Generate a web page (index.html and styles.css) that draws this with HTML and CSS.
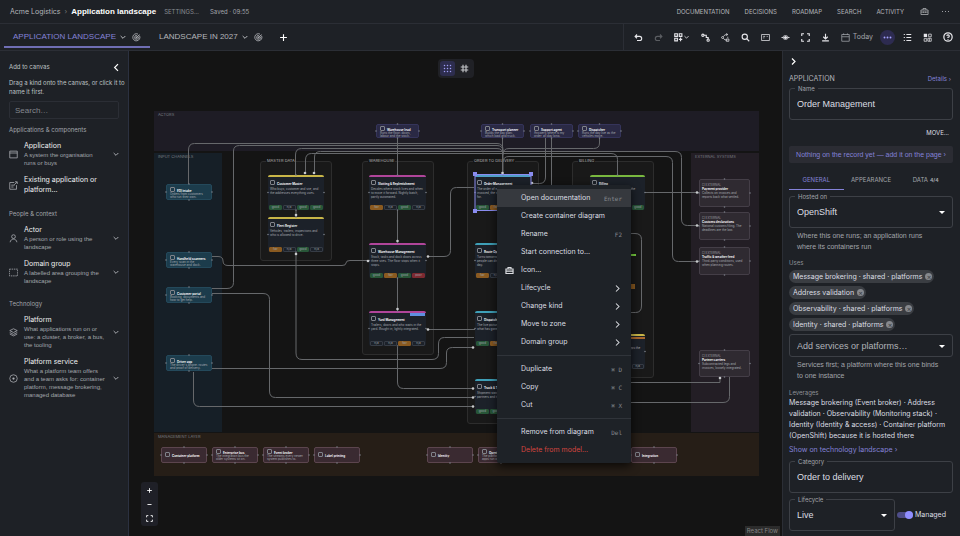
FILE: index.html
```html
<!DOCTYPE html>
<html lang="en">
<head>
<meta charset="utf-8">
<title>Application landscape</title>
<link rel="stylesheet" href="styles.css">
</head>
<body>
<svg class="defs" aria-hidden="true">
  <symbol id="i-down" viewBox="0 0 12 12"><path d="M2.500 4.500 6 8l3.500-3.500"/></symbol>
  <symbol id="i-right" viewBox="0 0 12 12"><path d="M4 2l4 4-4 4"/></symbol>
  <symbol id="i-left" viewBox="0 0 12 12"><path d="M8 1.500 3.500 6 8 10.500"/></symbol>
  <symbol id="i-radar" viewBox="0 0 24 24"><path d="M20 7a9.500 9.500 0 1 1-4-4M16.500 9.500a5 5 0 1 1-3-2.500M12 12l8-8"/><circle cx="12" cy="12" r="1.500"/></symbol>
  <symbol id="i-case" viewBox="0 0 24 24"><path d="M2.500 8h19v12h-19zM8 8V4h8v4M2.500 13.500h19M9 12v3.500M15 12v3.500"/></symbol>
</svg>

<header class="topbar">
  <nav class="crumbs" aria-label="Breadcrumb">
    <a href="#">Acme Logistics</a><span class="sep">›</span><h1>Application landscape</h1>
  </nav>
  <button class="txt dim">SETTINGS…</button>
  <span class="saved">Saved · 09:55</span>
  <nav class="mainnav" aria-label="Main">
    <a href="#">DOCUMENTATION</a><a href="#">DECISIONS</a><a href="#">ROADMAP</a><a href="#">SEARCH</a><a href="#">ACTIVITY</a>
    <button aria-label="Workspace"><svg class="ic"><use href="#i-case"/></svg></button>
    <button aria-label="More"><svg class="ic dots" viewBox="0 0 24 24"><circle cx="4" cy="12" r="1.500"/><circle cx="12" cy="12" r="1.500"/><circle cx="20" cy="12" r="1.500"/></svg></button>
  </nav>
</header>

<div class="tabbar">
  <div class="tabs">
    <div class="tab active"><button>APPLICATION LANDSCAPE</button><button aria-label="Tab menu"><svg class="ic s fine"><use href="#i-down"/></svg></button><button aria-label="Focus"><svg class="ic"><use href="#i-radar"/></svg></button></div>
    <div class="tab"><button>LANDSCAPE IN 2027</button><button aria-label="Tab menu"><svg class="ic s fine"><use href="#i-down"/></svg></button><button aria-label="Focus"><svg class="ic"><use href="#i-radar"/></svg></button></div>
    <button class="add" aria-label="Add tab"><svg class="ic bold" viewBox="0 0 24 24"><path d="M12 3v18M3 12h18"/></svg></button>
  </div>
  <div class="tools">
    <button aria-label="Undo"><svg class="ic bold" viewBox="0 0 24 24"><path d="M8 4 3 9l5 5M3 9h12a5 5 0 0 1 0 11H8"/></svg></button>
    <button aria-label="Redo" class="off"><svg class="ic bold" viewBox="0 0 24 24"><path d="m16 4 5 5-5 5M21 9H9a5 5 0 0 0 0 11h7"/></svg></button>
    <button aria-label="Arrange" class="pair"><svg class="ic bold" viewBox="0 0 24 24"><path d="M2 2h7v7H2zM14 2h7v7h-7zM2 14h7v7H2zM17.500 12v10M13 17h9"/></svg><svg class="ic s fine"><use href="#i-down"/></svg></button>
    <button aria-label="Route edges"><svg class="ic bold" viewBox="0 0 24 24"><circle cx="5" cy="6" r="3"/><circle cx="19" cy="19" r="3"/><path d="M8 6h6v6h5v4"/></svg></button>
    <button aria-label="Branch"><svg class="ic" viewBox="0 0 24 24"><circle cx="4" cy="12" r="2.500"/><path d="M6 10c3-5 6-6 11-6M6 14c3 4 6 5 11 5M14 1l4 3-4 3M14 16h7v6h-7zM18 10v3"/></svg></button>
    <button aria-label="Search"><svg class="ic bold" viewBox="0 0 24 24"><circle cx="10" cy="10" r="7"/><path d="m15 15 7 7"/></svg></button>
    <button aria-label="Notes"><svg class="ic" viewBox="0 0 24 24"><path d="M1.500 4h21v16h-21zM6 9h5M6 13h3M15 9h3"/></svg></button>
    <button aria-label="Visibility"><svg class="ic" viewBox="0 0 24 24"><path d="M1 12h22M4 12c4-7 12-7 16 0-4 7-12 7-16 0z"/><circle class="fill" cx="12" cy="12" r="4"/></svg></button>
    <button aria-label="Fit view"><svg class="ic bold" viewBox="0 0 24 24"><path d="M2 8V2h6M16 2h6v6M22 16v6h-6M8 22H2v-6"/></svg></button>
    <button aria-label="Download"><svg class="ic bold" viewBox="0 0 24 24"><path d="M12 2v13M6 10l6 6 6-6M3 21h18"/></svg></button>
    <button class="today"><svg class="ic" viewBox="0 0 24 24"><path d="M2 4h20v18H2zM2 10h20M7 1v4M17 1v4"/></svg>Today</button>
    <button aria-label="More tools" class="round"><svg class="ic dots" viewBox="0 0 24 24"><circle cx="4" cy="12" r="2.500"/><circle cx="12" cy="12" r="2.500"/><circle cx="20" cy="12" r="2.500"/></svg></button>
    <button aria-label="Outline"><svg class="ic bold" viewBox="0 0 24 24"><path d="M9 4h13M9 12h13M9 20h13M2 4h3M2 12h3M2 20h3"/></svg></button>
    <button aria-label="Layers"><svg class="ic" viewBox="0 0 24 24"><path class="fill" d="M2 2h9v9H2z"/><path d="M15 3h7v7h-7zM3 15h7v7H3zM13 14h9v8h-9zM17 14v8"/></svg></button>
    <button aria-label="Help"><svg class="ic l bold" viewBox="0 0 24 24"><circle cx="12" cy="12" r="10"/><path d="M9 9.500a3 3 0 1 1 3 3.500v1.500M12 17v1.500"/></svg></button>
  </div>
</div>

<main class="work">
  <aside class="palette">
    <div class="phead"><h2>Add to canvas</h2><button aria-label="Collapse"><svg class="ic bright"><use href="#i-left"/></svg></button></div>
    <p class="hint">Drag a kind onto the canvas, or click it to name it first.</p>
    <input class="search" type="search" placeholder="Search…" aria-label="Search kinds">
    <h3>Applications &amp; components</h3>
    <button class="kind"><svg class="ic" viewBox="0 0 24 24"><path d="M2 3h20v18H2zM2 8h20"/></svg><span><b>Application</b><small>A system the organisation runs or buys</small></span><svg class="ic s fine"><use href="#i-down"/></svg></button>
    <button class="kind"><svg class="ic" viewBox="0 0 24 24"><path d="M14 4H2v18h18V11M6 11h9M6 16h6M14 10l7-7M16 2h6v6"/></svg><span><b>Existing application or platform…</b></span></button>
    <h3>People &amp; context</h3>
    <button class="kind"><svg class="ic" viewBox="0 0 24 24"><circle cx="12" cy="7" r="5"/><path d="M3 22c1-11 17-11 18 0"/></svg><span><b>Actor</b><small>A person or role using the landscape</small></span><svg class="ic s fine"><use href="#i-down"/></svg></button>
    <button class="kind"><svg class="ic" viewBox="0 0 24 24"><path stroke-dasharray="4 2" d="M1 3h22v18H1z"/></svg><span><b>Domain group</b><small>A labelled area grouping the landscape</small></span><svg class="ic s fine"><use href="#i-down"/></svg></button>
    <h3>Technology</h3>
    <button class="kind"><svg class="ic" viewBox="0 0 24 24"><path d="m12 2 10 5-10 5L2 7zM2 12l10 5 10-5M2 16l10 5 10-5"/></svg><span><b>Platform</b><small>What applications run on or use: a cluster, a broker, a bus, the tooling</small></span><svg class="ic s fine"><use href="#i-down"/></svg></button>
    <button class="kind"><svg class="ic" viewBox="0 0 24 24"><circle cx="12" cy="12" r="10"/><circle class="fill" cx="12" cy="12" r="3"/></svg><span><b>Platform service</b><small>What a platform team offers and a team asks for: container platform, message brokering, managed database</small></span><svg class="ic s fine"><use href="#i-down"/></svg></button>
  </aside>

  <section class="canvas" aria-label="Diagram">
    <div class="world" id="world">
      <svg class="edges" id="edges" aria-hidden="true"></svg>
    </div>
    <div class="snap">
      <button class="on" aria-label="Dot grid"><svg class="ic dots" viewBox="0 0 24 24"><g id="gd"><circle cx="4" cy="4" r="2"/><circle cx="12" cy="4" r="2"/><circle cx="20" cy="4" r="2"/></g><use href="#gd" y="8"/><use href="#gd" y="16"/></svg></button>
      <button aria-label="Line grid"><svg class="ic bold" viewBox="0 0 24 24"><path d="M8 2v20M16 2v20M2 8h20M2 16h20"/></svg></button>
    </div>
    <div class="zoom">
      <button aria-label="Zoom in"><svg class="ic bold" viewBox="0 0 24 24"><path d="M12 4v16M4 12h16"/></svg></button>
      <button aria-label="Zoom out"><svg class="ic bold" viewBox="0 0 24 24"><path d="M5 12h14"/></svg></button>
      <button aria-label="Fit"><svg class="ic bold" viewBox="0 0 24 24"><path d="M2 8V2h6M16 2h6v6M22 16v6h-6M8 22H2v-6"/></svg></button>
    </div>
    <a class="credit" href="#">React Flow</a>
    <div class="menu" role="menu">
      <button role="menuitem" class="hot"><span>Open documentation</span><kbd>Enter</kbd></button>
      <button role="menuitem"><span>Create container diagram</span></button>
      <button role="menuitem"><span>Rename</span><kbd>F2</kbd></button>
      <button role="menuitem"><span>Start connection to…</span></button>
      <button role="menuitem"><svg class="ic bold"><use href="#i-case"/></svg><span>Icon…</span></button>
      <button role="menuitem"><span>Lifecycle</span><svg class="ic fine"><use href="#i-right"/></svg></button>
      <button role="menuitem"><span>Change kind</span><svg class="ic fine"><use href="#i-right"/></svg></button>
      <button role="menuitem"><span>Move to zone</span><svg class="ic fine"><use href="#i-right"/></svg></button>
      <button role="menuitem"><span>Domain group</span><svg class="ic fine"><use href="#i-right"/></svg></button>
      <hr>
      <button role="menuitem"><span>Duplicate</span><kbd>⌘ D</kbd></button>
      <button role="menuitem"><span>Copy</span><kbd>⌘ C</kbd></button>
      <button role="menuitem"><span>Cut</span><kbd>⌘ X</kbd></button>
      <hr>
      <button role="menuitem"><span>Remove from diagram</span><kbd>Del</kbd></button>
      <button role="menuitem" class="danger"><span>Delete from model…</span></button>
    </div>
  </section>

  <aside class="inspector">
    <button class="close" aria-label="Close panel"><svg class="ic bright"><use href="#i-right"/></svg></button>
    <div class="kindrow"><h2>APPLICATION</h2><a href="#">Details ›</a></div>
    <div class="field"><label for="name">Name</label><input id="name" value="Order Management"></div>
    <button class="move">MOVE…</button>
    <a class="notice" href="#">Nothing on the record yet — add it on the page ›</a>
    <div class="itabs"><button class="active">GENERAL</button><button>APPEARANCE</button><button>DATA <small>4/4</small></button></div>
    <div class="ibody">
      <div class="field pick"><label for="host">Hosted on</label><select id="host"><option>OpenShift</option></select></div>
      <p class="help">Where this one runs; an application runs where its containers run</p>
      <h4>Uses</h4>
      <div class="chips">
        <span class="chip">Message brokering · shared · platforms<button aria-label="Remove">×</button></span>
        <span class="chip">Address validation<button aria-label="Remove">×</button></span>
        <span class="chip">Observability · shared · platforms<button aria-label="Remove">×</button></span>
        <span class="chip">Identity · shared · platforms<button aria-label="Remove">×</button></span>
      </div>
      <div class="field pick low"><select aria-label="Add services or platforms"><option>Add services or platforms…</option></select></div>
      <p class="help">Services first; a platform where this one binds to one instance</p>
      <h4 class="lev">Leverages</h4>
      <p class="body">Message brokering (Event broker) · Address validation · Observability (Monitoring stack) · Identity (Identity &amp; access) · Container platform (OpenShift) because it is hosted there</p>
      <a class="show" href="#">Show on technology landscape ›</a>
      <div class="field"><label for="cat">Category</label><input id="cat" value="Order to delivery"></div>
      <div class="pairrow">
        <div class="field pick"><label for="life">Lifecycle</label><select id="life"><option>Live</option></select></div>
        <label class="switch"><input type="checkbox" role="switch" checked>Managed</label>
      </div>
    </div>
  </aside>
</main>
<script src="script.js"></script>
</body>
</html>
```
FILE: styles.css
```css
:root {
  --panel: #1e2126;
  --line: #2b2e35;
  --text: #dcdee2;
  --dim: #a2a5ab;
  --accent: #8482d8;
  --ui: Inter, "Liberation Sans", sans-serif;
  --wide: "Liberation Sans", Arial, sans-serif;
}
* { box-sizing: border-box; margin: 0; padding: 0; }
body {
  height: 100vh;
  display: flex;
  flex-direction: column;
  overflow: hidden;
  background: #141414;
  color: var(--text);
  font: 7px/10px var(--ui);
}
button, input, select { font: inherit; color: inherit; background: none; border: 0; }
button { display: flex; align-items: center; }
a { color: inherit; text-decoration: none; }
h1, h2, h3, h4 { font: inherit; }
.defs { display: none; }
.ic { width: 9px; height: 9px; flex: none; fill: none; stroke: currentColor; stroke-width: 2; }
.ic.s { width: 8px; height: 8px; }
.ic.l { width: 10px; height: 10px; }
.ic.bold { stroke-width: 3; }
.ic.fine { stroke-width: 1.4; }
.ic.bright { color: #fff; stroke-width: 1.6; }
.ic.dots, .ic .fill { fill: currentColor; stroke: none; }

.topbar {
  flex: none;
  display: flex;
  align-items: center;
  height: 24px;
  padding: 0 10px;
  background: var(--panel);
  border-bottom: 1px solid var(--line);
}
.crumbs { display: flex; align-items: center; gap: 4px; color: #b4b6ba; }
.crumbs .sep { color: #777; }
.crumbs h1 { font: 700 8px/10px var(--wide); color: #fff; }
.txt { margin-left: 8px; font-size: 6px; color: #898c92; }
.saved { margin-left: 11px; font-size: 6px; color: var(--dim); }
.mainnav { display: flex; align-items: center; gap: 15px; margin-left: auto; font-size: 6px; color: #b4b6ba; }
.mainnav button { margin-left: 1px; }
.mainnav button + button { margin-left: -3px; }

.tabbar {
  flex: none;
  display: flex;
  justify-content: space-between;
  height: 27px;
  background: var(--panel);
  border-bottom: 1px solid var(--line);
}
.tabs { display: flex; padding-left: 4px; font: 8px/10px var(--wide); }
.tab { display: flex; align-items: center; gap: 3px; margin-bottom: 2px; padding: 4px 9px 0; border-bottom: 2px solid transparent; color: #b4b6ba; }
.tab.active { border-color: #6f6eb4; }
.tab.active button:first-child { color: var(--accent); }
.tab button:last-child { margin-left: 2px; }
.tab .ic { color: #c4c6ca; }
.add { padding: 0 7px; color: #fff; }
.tools { display: flex; align-items: center; gap: 11px; padding: 0 7px 0 10px; border-left: 1px solid var(--line); color: #e6e6ea; }
.tools .off { opacity: .3; }
.tools .pair .s { width: 7px; }
.tools .today { gap: 3px; margin-right: -1px; color: var(--dim); }
.tools .round { width: 15px; height: 15px; margin: 0 -3px; justify-content: center; border-radius: 50%; background: #2d2b50; color: #a5a2ff; }

.work { flex: 1; min-height: 0; display: grid; grid-template-columns: 129px 1fr 178px; }

.palette { padding: 11px 7px 0 9px; background: var(--panel); border-right: 1px solid #2b3140; overflow: hidden; }
.phead { display: flex; justify-content: space-between; align-items: center; color: #bfc1c5; font-size: 6px; }
.hint { margin: 6px -4px 0 0; font-size: 6px; line-height: 9px; color: #bfc1c5; }
.search { display: block; width: 110px; height: 18px; margin-top: 5px; padding: 0 5px; border: 1px solid var(--line); border-radius: 2px; font: 8px/10px var(--wide); }
.search::placeholder { color: #85888e; }
.palette h3 { padding: 10px 0 2px; font-size: 6px; color: var(--dim); }
.palette .search + h3 { padding-top: 6px; }
.kind { width: 100%; padding: 4px 0; gap: 6px; text-align: left; color: #b0b3b8; }
.kind span { flex: 1; padding-right: 1px; }
.kind b { display: block; font-weight: 400; color: #eeeff1; }
.kind small { display: block; font: 6px/8px var(--wide); color: var(--dim); }
.kind > .s { margin-right: 1px; }

.canvas { position: relative; overflow: hidden; background: #141414; }
.world { position: absolute; inset: 0; font: 3px/4px var(--ui); }
.edges { position: absolute; inset: 0; width: 100%; height: 100%; fill: none; stroke: #66686b; stroke-width: 1; }
.edges .head { fill: #c8cacd; stroke: none; }
.edges .port { fill: #777b84; stroke: none; }
.edges .grip { fill: #8a8cf0; stroke: none; }
.zone { position: absolute; padding: 2px 4px; color: #777a80; font-size: 4px; }
.zone.actors { background: #1e1c25; }
.zone.input { background: #161f27; }
.zone.external { background: #231e25; }
.zone.mgmt { background: #261e17; }
.group { position: absolute; border: 1px solid #2d2d2d; border-radius: 3px; background: #191919; }
.group span { position: absolute; top: -3px; left: 5px; padding: 0 1px; background: #161616; color: #b0b0b0; font-size: 4px; white-space: nowrap; }
.node { position: absolute; overflow: hidden; border-radius: 2px; color: #a7abb2; }
.node b { display: block; white-space: nowrap; color: #f0f1f4; }
.node b::before { content: ""; display: inline-block; width: 3px; height: 3px; margin-right: 2px; border: 1px solid #80838a; border-radius: 1px; }
.node p { line-height: 3px; height: 6px; }
.node.app { padding: 3px 2px; background: #1c2129; border-top: 2px solid #999; }
.node.app p { height: auto; padding-top: 1px; line-height: 4px; }
.node.yellow { border-color: #c9b648; }
.node.pink { border-color: #b0459a; }
.node.cyan { border-color: #3fa0b8; }
.node.blue { border-color: #4f9fc8; }
.node.green { border-color: #79b83f; }
.node.actor { padding: 1px 3px; background: #2a2944; border: 1px solid #35345a; }
.node.channel { padding: 2px 3px; background: #1c3c4c; border: 1px solid #24495b; }
.node.ext { padding: 3px 2px; background: #2f2a31; border: 1px solid #443e47; }
.node.ext i { display: block; font-style: normal; color: #9b98a0; }
.node.ext b::before { display: none; }
.node.ext p { line-height: 4px; height: 8px; }
.node.plat { display: flex; flex-direction: column; justify-content: center; padding: 0 3px; background: #3a2a31; border: 1px solid #5c454e; }
.tags { position: absolute; left: 1px; right: 1px; bottom: 0; height: 5px; display: flex; gap: 1px; }
.tags span { flex: 1; border: 1px solid #363c45; border-radius: 1px; line-height: 3px; text-align: center; color: #9ea3aa; }
.tags .g { background: #285638; border-color: #285638; }
.tags .o { background: #8a5a20; border-color: #8a5a20; }
.tags .r { background: #7c2930; border-color: #7c2930; }

.snap { position: absolute; top: 8px; left: 50%; transform: translateX(-50%); display: flex; gap: 2px; padding: 2px; border-radius: 4px; background: #202126; color: #c4c6ca; }
.snap button { width: 15px; height: 15px; justify-content: center; border-radius: 3px; }
.snap .on { background: #2d2d4e; color: #a09ef5; }
.zoom { position: absolute; left: 12px; bottom: 10px; padding: 1px; border-radius: 3px; background: #1f2027; color: #fff; }
.zoom button { width: 15px; height: 14px; justify-content: center; }
.zoom .ic { width: 7px; height: 7px; }
.credit { position: absolute; right: 2px; bottom: 0; padding: 0 2px; background: #2c2c2c; color: #858585; font-size: 6px; }

.menu {
  position: absolute;
  left: 368px;
  top: 134px;
  width: 134px;
  padding: 4px 0;
  border-radius: 2px;
  background: #1e2227;
  box-shadow: 0 3px 10px #000b;
}
.menu button { position: relative; width: 100%; height: 18px; padding: 0 9px 0 24px; justify-content: space-between; }
.menu .hot { background: #36393e; }
.menu kbd { font: 6px "DejaVu Sans Mono", monospace; color: #85898f; }
.menu .ic:first-child { position: absolute; left: 8px; }
.menu hr { margin: 4px 0; border: 0; border-top: 1px solid #30343a; }
.menu .danger { color: #d4453f; }

.inspector { padding: 5px 7px 0 6px; background: var(--panel); border-left: 1px solid var(--line); overflow: hidden; }
.close { height: 10px; }
.kindrow { display: flex; justify-content: space-between; margin: 8px 0 4px; color: #b4b6ba; }
.kindrow a { padding-right: 2px; font-size: 6px; color: var(--accent); }
.field { position: relative; height: 32px; border: 1px solid #3d4046; border-radius: 3px; }
.field label { position: absolute; left: 5px; top: -5px; padding: 0 3px; font-size: 6px; line-height: 9px; background: var(--panel); color: var(--dim); }
.field input, .field select { display: block; width: 100%; height: 100%; padding: 0 7px; font: 9px/12px var(--wide); appearance: none; outline: 0; }
.pick::after { content: ""; position: absolute; right: 7px; top: calc(50% - 1px); border: 3px solid transparent; border-top-color: #fff; pointer-events: none; }
.field.low { height: 23px; }
.low select { color: #b0b3b8; }
.move { margin: 8px 4px 8px auto; font-size: 6px; }
.notice { display: block; padding: 4px 0; border-radius: 2px; background: #2b2c33; font: 7px/9px var(--wide); color: var(--accent); white-space: nowrap; text-align: center; }
.itabs { display: flex; margin-top: 7px; font-size: 6px; color: var(--dim); }
.itabs button { flex: 1; height: 20px; justify-content: center; gap: 2px; border-bottom: 1px solid transparent; }
.itabs small { font-size: 5px; font-weight: 700; }
.itabs .active { color: var(--accent); border-color: var(--accent); }
.ibody { padding-top: 6px; }
.help { padding: 2px 12px 0 8px; font: 7px/11px var(--wide); color: var(--dim); }
.ibody h4 { margin-top: 7px; font-size: 6px; line-height: 8px; color: #8f9298; }
.chips { display: flex; flex-direction: column; align-items: flex-start; gap: 3px; margin: 3px 0; }
.chip { display: flex; align-items: center; gap: 3px; height: 13px; padding: 0 2px 0 4px; border-radius: 7px; background: #3a3d42; }
.chip button { width: 7px; height: 7px; justify-content: center; border-radius: 50%; background: #85888d; color: #3a3d42; line-height: 7px; }
.ibody .lev { margin-top: 8px; }
.body { line-height: 11px; }
.show { display: block; margin: 4px 0 6px; color: var(--accent); }
.pairrow { display: flex; align-items: center; gap: 2px; margin-top: 6px; }
.pairrow .field { flex: 0 0 106px; }
.switch { display: flex; align-items: center; gap: 2px; }
.switch input { position: relative; width: 16px; height: 6px; border-radius: 3px; background: #4e4d88; appearance: none; }
.switch input::after { content: ""; position: absolute; right: 0; top: -1px; width: 8px; height: 8px; border-radius: 50%; background: #908eff; }
```
FILE: script.js
```js
// Diagram data in model coordinates; ORIGIN is the model point at the canvas corner.
const ORIGIN = { x: 129, y: 51 };
const world = document.getElementById("world");
const edges = document.getElementById("edges");

function place(cls, x, y, w, h, html) {
  const el = document.createElement("div");
  el.className = cls;
  el.style.cssText = `left:${x - ORIGIN.x}px;top:${y - ORIGIN.y}px;width:${w}px;height:${h}px`;
  el.innerHTML = html;
  world.insertBefore(el, cls.startsWith("node") ? null : edges);
}

[
  ["actors", 154, 111, 605, 40, "ACTORS"],
  ["input", 154, 153, 68, 279, "INPUT CHANNELS"],
  ["external", 691, 153, 68, 279, "EXTERNAL SYSTEMS"],
  ["mgmt", 154, 433, 605, 43, "MANAGEMENT LAYER"]
].forEach(([c, x, y, w, h, t]) => place("zone " + c, x, y, w, h, t));

[
  [260, 161, 72, 100, "MASTER DATA"],
  [362, 161, 72, 194, "WAREHOUSE"],
  [467, 161, 72, 263, "ORDER TO DELIVERY"],
  [572, 161, 82, 217, "BILLING"]
].forEach(([x, y, w, h, t]) => place("group", x, y, w, h, `<span>${t}</span>`));

const ports = [];
function node(kind, x, y, w, h, title, text = "", tags = "") {
  const labels = { g: "good", o: "fair", r: "poor", n: "n/a" };
  const strip = tags && `<div class="tags">${[...tags].map(t => `<span class="${t}">${labels[t]}</span>`).join("")}</div>`;
  const over = kind === "ext" ? "<i>▢ EXTERNAL</i>" : "";
  place("node " + kind, x, y, w, h, `${over}<b>${title}</b>${text && `<p>${text}</p>`}${strip}`);
  ports.push([x, y + h / 2], [x + w, y + h / 2], [x + w / 2, y], [x + w / 2, y + h]);
}

node("app yellow", 268, 175, 56, 35, "Customer Master", "Who buys, customer and site, and the addresses everything uses.", "gngg");
node("app yellow", 268, 217, 56, 35, "Fleet Register", "Vehicles, trailers, inspections and who is allowed to drive.", "ongn");
node("app pink", 369, 175, 57, 35, "Slotting &amp; Replenishment", "Decides where stock lives and when to move it forward. Nightly batch, partly automated.", "ongn");
node("app pink", 369, 243, 57, 35, "Warehouse Management", "Stock, tasks and dock doors across three sites. The floor stops when it stops.", "gogr");
node("app pink", 369, 311, 57, 35, "Yard Management", "Trailers, doors and who waits in the yard. Bought in, lightly integrated.", "nnon");
node("app blue", 475, 175, 56, 35, "Order Management", "The order of record: booked to invoiced, the status everyone asks for.", "gogn");
node("app cyan", 475, 243, 56, 35, "Route Optimisation", "Turns tomorrow's orders into routes people can drive, replanned every day.", "ongg");
node("app cyan", 475, 311, 56, 35, "Dispatch Board", "The live picture: who has what load, what has gone wrong.", "gogn");
node("app cyan", 475, 379, 56, 35, "Track &amp; Trace", "Shipment status for support, partners and the customer portal.", "gggg");
node("app green", 590, 175, 55, 35, "Billing", "Rates each delivery, raises the invoice and chases it.", "gngg");
node("app yellow", 590, 334, 55, 35, "Ledger", "Posts every invoice and keeps the books in one place.", "ngnn");

node("actor", 376, 124, 43, 14, "Warehouse lead", "Runs the floor: doors, labour and the stock.");
node("actor", 481, 124, 43, 14, "Transport planner", "Builds the day plan: which load and truck.");
node("actor", 530, 124, 43, 14, "Support agent", "Answers where is my order, all day long.");
node("actor", 578, 124, 43, 14, "Dispatcher", "Runs the day live as the vehicles move.");

node("channel", 166, 184, 46, 16, "EDI intake", "Orders from customers who run their own.");
node("channel", 166, 252, 46, 16, "Handheld scanners", "Every scan in the warehouse and dock.");
node("channel", 166, 287, 46, 16, "Customer portal", "Booking, documents and how to get help.");
node("channel", 166, 355, 46, 16, "Driver app", "The driver's phone: routes and proof of delivery.");

node("ext", 699, 179, 51, 28, "Payment provider", "Collects on invoices and reports back what settled.");
node("ext", 699, 212, 51, 28, "Customs declarations", "National customs filing. The deadlines are the law.");
node("ext", 699, 247, 51, 28, "Traffic &amp; weather feed", "Third-party conditions, used when planning routes.");
node("ext", 699, 350, 51, 27, "Partner carriers", "Subcontracted legs and invoices, loosely integrated.");

node("plat", 161, 447, 46, 16, "Container platform");
node("plat", 212, 447, 46, 16, "Enterprise bus", "The integration bus the older systems sit on.");
node("plat", 263, 447, 46, 16, "Event broker", "The streams every newer system publishes to.");
node("plat", 314, 447, 46, 16, "Label printing");
node("plat", 427, 447, 46, 16, "Identity");
node("plat", 478, 447, 46, 16, "OpenShift", "The platform the newer apps run on.");
node("plat", 631, 447, 46, 16, "Integration");

const paths = [
  "M188.500 184V150q0-6.500 6-6.500H497q6 0 6 6V175",
  "M212 288.500H227q6.500 0 6.500-6V151q0-5.500 6-5.500H497q6 0 6 6",
  "M295.500 175V155q0-6.500 6-6.500H497q6 0 6 6",
  "M305.500 174V160q0-6.500 6-6.500H611q6.500 0 6.500 6V175",
  "M314.500 174V157q0-5.500 6-5.500H675q6.500 0 6.500 6V219q0 6.500 6 6.500H699",
  "M503 162q0-5.500 6-5.500H666q6.500 0 6.500 6V255q0 6.500 6 6.500H699",
  "M599.500 138V143q0 5.500-6 5.500H509q-6 0-6 6",
  "M502.500 138V175", "M397.500 138V175", "M397.500 210V242", "M397.500 278V311",
  "M545.500 138V177q0 6.500-6 6.500H532", "M551.500 138V190",
  "M645 192.500H699", "M296 210V217",
  "M212 256.500H218q5 0 5 4.500t5 4.500H342q4 0 4-2.500t4-2.500H369",
  "M427 256.500H444q6.500 0 6.500-6V194q0-6.500 6-6.500H474",
  "M397.500 347V382q0 6.500 6 6.500H474",
  "M212 293.500H263q6.500 0 6.500 6V391q0 6.500 6 6.500H474",
  "M212 368.500H440q6.500 0 6.500-6V353q0-5.500 6-5.500H474",
  "M193.500 372V400q0 6.500 6 6.500H474",
  "M296 252V353q0 6.500 6 6.500H432q6.500 0 6.500-6V344q0-6.500 6-6.500H474",
  "M427 329.500H475",
  "M625 382.500H720V378", "M625 402.500H723q6.500 0 6.500-6V377",
  "M625 233.500H635q6.500 0 6.500 6V306q0 6.500-6 6.500H625"
];
const heads = [[502.5, 173], [305, 173], [314, 173], [296, 215], [296, 254], [397.5, 241], [397.5, 309], [532, 183], [697, 192.5], [697, 225.5], [697, 261.5], [368, 261], [428, 256.5], [473, 388.5], [473, 397.5], [473, 406.5], [473, 347.5], [428, 329.5], [720, 378]];
edges.innerHTML = `<g transform="translate(${-ORIGIN.x} ${-ORIGIN.y})">`
  + paths.map(d => `<path d="${d}"/>`).join("")
  + ports.map(([x, y]) => `<circle class="port" cx="${x}" cy="${y}" r="0.8"/>`).join("")
  + heads.map(([x, y]) => `<circle class="head" cx="${x}" cy="${y}" r="1.300"/>`).join("")
  // Slivers of the invoicing card and the tags that show beside an open menu
  + `<path stroke="#79d040" stroke-width="2" d="M590 255H636"/><path stroke="#8a5a20" stroke-width="5" d="M622 286.500H635"/>`
  + `<path stroke="#a8662c" stroke-width="2" d="M625 338H645"/><path stroke="#5f8fe0" stroke-width="3" d="M410 314.500H425"/>`
  + `<rect x="475" y="174.500" width="56" height="36" stroke="#8a8cf0"/>`
  + [[475, 174], [531, 174], [475, 211]].map(([x, y]) => `<rect class="grip" x="${x - 2}" y="${y - 2}" width="4" height="4"/>`).join("")
  + `</g>`;
world.append(edges);
```
